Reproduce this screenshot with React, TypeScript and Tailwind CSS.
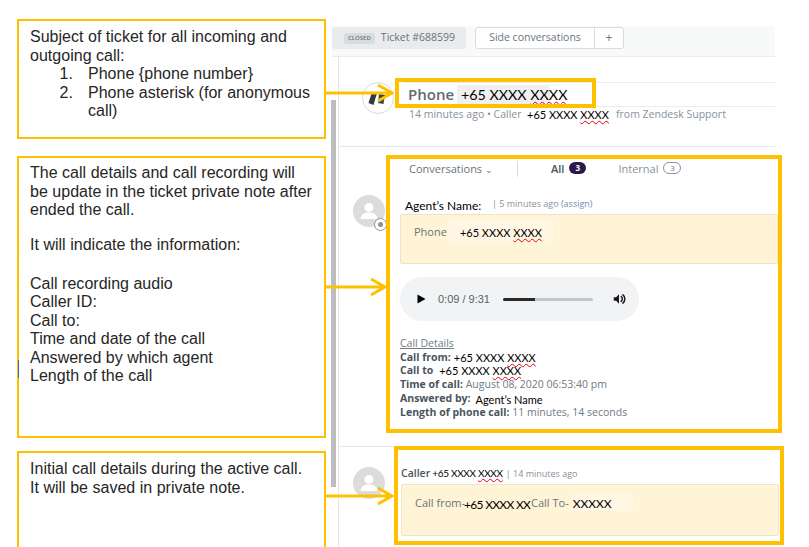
const ui = "font-['Open_Sans',sans-serif]";
const cal = "font-['Lato','Open_Sans',sans-serif]";

function Num({ size = "text-[12px]" }: { size?: string }) {
  return (
    <span className={`${cal} ${size} text-black whitespace-nowrap`}>
      +65 XXXX <span className="underline decoration-wavy decoration-red-600 decoration-1">XXXX</span>
    </span>
  );
}

function Avatar() {
  return (
    <div className="relative w-8 h-8 rounded-full bg-[#dcdcdc] overflow-hidden shrink-0">
      <svg viewBox="0 0 32 32" className="w-8 h-8">
        <circle cx="16" cy="12.500" r="4.500" fill="#fff" />
        <path d="M7.500 24c0-4.500 4-6.500 8.500-6.500s8.500 2 8.500 6.500z" fill="#fff" />
      </svg>
    </div>
  );
}

function Arrow({ className, w }: { className: string; w: number }) {
  return (
    <svg className={`absolute ${className}`} width={w} height="22" viewBox={`0 0 ${w} 22`}>
      <path d={`M0 11H${w - 2}M${w - 16} 3L${w - 2} 11L${w - 16} 19`} fill="none" stroke="#ffc000" strokeWidth="3" />
    </svg>
  );
}

export default function App() {
  return (
    <div className="relative w-[809px] h-[547px] overflow-hidden bg-white flex font-['Liberation_Sans',sans-serif]">
      {/* Left annotations */}
      <div className="w-[332px] shrink-0 pl-[17px] pt-[19px] flex flex-col text-[16px] leading-[18.500px] text-[#262626] tracking-[0.02px]">
        <div className="w-[309px] h-[120px] border-2 border-[#ffc000] pl-[11px] pt-[7px] shrink-0">
          <p>Subject of ticket for all incoming and<br />outgoing call:</p>
          <ol className="pl-[19px]">
            <li className="flex"><span className="w-[39px] text-right pr-[15px] shrink-0">1.</span><span>Phone {"{phone number}"}</span></li>
            <li className="flex"><span className="w-[39px] text-right pr-[15px] shrink-0">2.</span><span className="w-[235px]">Phone asterisk (for anonymous call)</span></li>
          </ol>
        </div>
        <div className="mt-[17px] w-[309px] h-[282px] border-2 border-[#ffc000] pl-[11px] pt-[6px] shrink-0">
          <p>The call details and call recording will<br />be update in the ticket private note after<br />ended the call.</p>
          <p className="mt-[16px]">It will indicate the information:</p>
          <p className="mt-[20.500px]">Call recording audio<br />Caller ID:<br />Call to:<br />Time and date of the call<br />Answered by which agent<br />Length of the call</p>
        </div>
        <div className="mt-[13px] w-[309px] h-[110px] border-2 border-[#ffc000] pl-[11px] pt-[7px] shrink-0">
          <p>Initial call details during the active call.<br />It will be saved in private note.</p>
        </div>
      </div>

      {/* Ticket panel */}
      <div className={`w-[443px] shrink-0 pt-[26px] text-[#68737d] ${ui}`}>
        <div className="h-[31px] bg-[#f8f9f9] border-b border-[#e9ebed] flex items-start gap-[9px]">
          <div className="w-[134px] h-[22px] mt-[1px] bg-[#e9ebed] rounded-[3px] flex items-center pl-[12px] gap-[6px]">
            <span className="bg-[#d8dcde] rounded-[3px] px-[4px] text-[6px] leading-[11px] font-semibold">CLOSED</span>
            <span className="text-[10.500px]">Ticket #688599</span>
          </div>
          <div className="h-[22px] mt-[1px] flex items-center bg-white border border-[#d8dcde] rounded-[3px] text-[10.500px]">
            <span className="w-[118px] text-center">Side conversations</span>
            <span className="w-[29px] h-full border-l border-[#d8dcde] flex items-center justify-center text-[12px]">+</span>
          </div>
        </div>

        <div className="ml-[6px] border-l border-[#e3e5e7] h-[490px] flex flex-col">
          <section className="h-[90px] border-b border-[#e6e8ea] pt-[25px] pl-[23px] flex gap-[9px] shrink-0">
            <div className="w-8 h-8 rounded-full bg-white border border-[#dcdcdc] flex items-center justify-center shrink-0">
              <svg width="20" height="18" viewBox="0 0 20 18">
                <path d="M4 3l5 1-3.500 12-5-2z" fill="#2f3941" />
                <path d="M11 5l6 1-1.500 9-5.500-1z" fill="#3c464e" />
              </svg>
            </div>
            <div className="w-[373px]">
              <div className="h-[25px] border-y border-[#e9ebed] flex items-center pl-[5px]">
                <span className="text-[15px] font-semibold text-[#5f6a73] w-[49px]">Phone</span>
                <span className="bg-[#f0f0f0] w-[93px] h-[19px] pl-[4px] flex items-center">
                  <Num size="text-[14.300px]" />
                </span>
              </div>
              <div className="text-[10.500px] leading-[15px] text-[#87929d] pl-[6px] flex items-center whitespace-nowrap">
                <span className="w-[118px]">14 minutes ago • Caller</span>
                <span className="w-[90px] bg-white flex items-center"><Num size="text-[11px]" /></span>
                <span className="ml-[-1px]">from Zendesk Support</span>
              </div>
            </div>
          </section>

          <section className="h-[300px] border-b border-[#e6e8ea] pl-[14px] flex gap-[15px] shrink-0">
            <div className="relative mt-[48px] h-8">
              <Avatar />
              <span className="absolute right-[-2px] bottom-[-4px] w-[13px] h-[13px] rounded-full bg-white border border-[#87929d] flex items-center justify-center">
                <span className="w-[5px] h-[5px] rounded-full bg-[#87929d]" />
              </span>
            </div>
            <div className="flex-1 min-w-0 text-[10px]">
              <div className="h-[50px] pl-[9px] pt-[14px] flex items-start text-[11px] leading-[15px] whitespace-nowrap">
                <span className="w-[80px]">Conversations <span className="text-[9px]">⌄</span></span>
                <span className="w-px h-[16px] bg-[#d8dcde] ml-[28px]" />
                <span className="ml-[33px] font-semibold text-[#49545c]">All</span>
                <span className="ml-[5px] mt-[1px] w-[17px] h-[12px] rounded-full bg-[#2a1a4a] text-white text-[8px] leading-[12px] text-center font-bold">3</span>
                <span className="ml-[32px] text-[#87929d]">Internal</span>
                <span className="ml-[5px] mt-[1px] w-[18px] h-[12px] rounded-full border border-[#87929d] text-[8px] leading-[10px] text-center">3</span>
              </div>
              <div className="h-[15px] flex items-start pl-[5px] whitespace-nowrap">
                <span className={`${cal} text-[12px] leading-[15px] text-black w-[87px] mt-[1px]`}>Agent’s Name:</span>
                <span className="text-[#87929d] text-[9px] leading-[13px]">| 5 minutes ago <span className="text-[#6a8fb5]">(assign)</span></span>
              </div>
              <div className="mt-[2px] h-[50px] w-[378px] bg-[#fff4d6] border border-[#f1e4c5] rounded-[2px] pl-[13px] flex items-start">
                <span className="mt-[9px] text-[11px] leading-[15px]">Phone</span>
                <span className="ml-[1px] mt-[4px] w-[105px] h-[24px] bg-[#fff7e3] pl-[12px] pt-[4px] flex items-center"><Num size="text-[11px]" /></span>
              </div>
              <div className="mt-[13px] w-[239px] h-[44px] rounded-full bg-[#f1f3f4] flex items-center pl-[17px]">
                <svg width="9" height="10" viewBox="0 0 9 10" className="shrink-0"><path d="M0.500 0.500L8.500 5L0.500 9.500z" fill="#000" /></svg>
                <span className="ml-[12px] w-[65px] text-[11px] font-['Liberation_Sans',sans-serif] text-[#5a5f63] whitespace-nowrap">0:09 / 9:31</span>
                <span className="w-[90px] h-[3px] bg-[#c4c6c8] rounded-full overflow-hidden"><span className="block w-[32px] h-full bg-[#2a2a2a]" /></span>
                <svg width="14" height="14" viewBox="0 0 24 24" className="ml-[19px] shrink-0">
                  <path d="M3 9v6h4l5 5V4L7 9z" fill="#1a1a1a" />
                  <path d="M15 7a6 6 0 0 1 0 10M18 4a10 10 0 0 1 0 16" fill="none" stroke="#1a1a1a" strokeWidth="2.500" />
                </svg>
              </div>
              <div className="mt-[16px] text-[10.500px] leading-[13.700px] text-[#6f7a83] whitespace-nowrap">
                <div className="underline">Call Details</div>
                <div className="flex items-center"><b className="text-[#49545c] mr-[3px]">Call from:</b><Num size="text-[11px]" /></div>
                <div className="flex items-center"><b className="text-[#49545c] mr-[6px]">Call to</b><Num size="text-[11px]" /></div>
                <div><b className="text-[#49545c]">Time of call:</b> August 08, 2020 06:53:40 pm</div>
                <div className="flex items-center"><b className="text-[#49545c] mr-[5px]">Answered by:</b><span className={`${cal} text-[11px] text-black h-[12px] leading-[14px]`}>Agent’s Name</span></div>
                <div><b className="text-[#49545c]">Length of phone call:</b> 11 minutes, 14 seconds</div>
              </div>
            </div>
          </section>

          <section className="flex-1 pl-[14px] pt-[19px] flex gap-[16px]">
            <div className="w-8 h-8 mt-[1px] relative"><Avatar /></div>
            <div className="flex-1 min-w-0">
              <div className="h-[15px] flex items-center whitespace-nowrap text-[10.500px]">
                <span className="font-semibold text-[#49545c] mr-[2px]">Caller</span>
                <span className="tracking-[-0.3px]"><Num size="text-[10px]" /></span>
                <span className="ml-[3px] text-[#87929d] text-[9px]">| 14 minutes ago</span>
              </div>
              <div className="mt-[3px] h-[52px] w-[378px] bg-[#fff4d6] border border-[#f1e4c5] rounded-[2px] pl-[13px] flex items-start text-[11px] whitespace-nowrap">
                <span className="mt-[10px] leading-[15px] w-[49px]">Call from-</span>
                <span className={`${cal} mt-[12px] text-[12px] leading-[15px] text-black w-[67px] tracking-[-0.7px]`}>+65 XXXX XX</span>
                <span className="mt-[10px] leading-[15px]">Call To-</span>
                <span className={`${cal} ml-[4px] mt-[8px] w-[60px] h-[18px] bg-[#fff7e3] text-[12px] leading-[22px] text-black`}>XXXXX</span>
              </div>
            </div>
          </section>
        </div>
      </div>

      {/* Scrollbar over the panel edge */}
      <div className="absolute left-[331px] top-[100px] w-[5px] h-[387px] bg-[#bdbdbd]" />

      {/* Highlight frames and arrows */}
      <div className="absolute left-[395px] top-[78px] w-[201px] h-[30px] border-[4px] border-[#ffc000]" />
      <div className="absolute left-[386px] top-[155px] w-[396px] h-[278px] border-[4px] border-[#ffc000]" />
      <div className="absolute left-[394px] top-[446px] w-[390px] h-[99px] border-[4px] border-[#ffc000]" />
      <Arrow className="left-[326px] top-[82px]" w={68} />
      <Arrow className="left-[326px] top-[276px]" w={61} />
      <Arrow className="left-[326px] top-[485px]" w={68} />
      <div className="absolute left-[18px] top-[360px] w-px h-[18px] bg-[#2f6fd0]" />
    </div>
  );
}
